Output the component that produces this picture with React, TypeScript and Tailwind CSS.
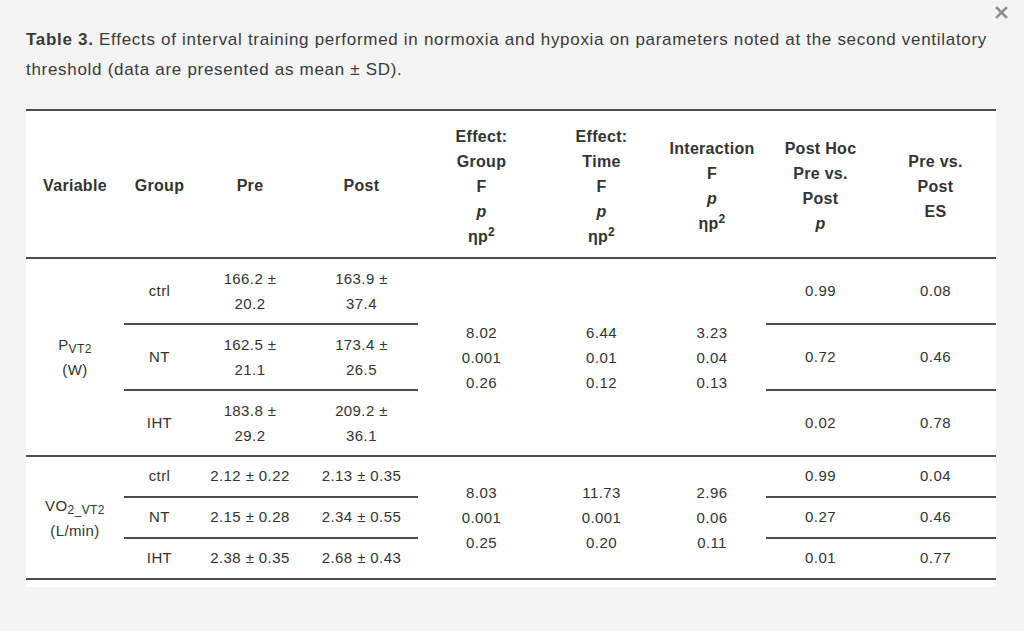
import React from "react";

const LINE = "border-[#4d4d4d]";

function Eta() {
  return (
    <span>
      ηp<sup className="text-[12px]">2</sup>
    </span>
  );
}

const pvt = [
  { g: "ctrl", pre: ["166.2 ±", "20.2"], post: ["163.9 ±", "37.4"], ph: "0.99", es: "0.08" },
  { g: "NT", pre: ["162.5 ±", "21.1"], post: ["173.4 ±", "26.5"], ph: "0.72", es: "0.46" },
  { g: "IHT", pre: ["183.8 ±", "29.2"], post: ["209.2 ±", "36.1"], ph: "0.02", es: "0.78" },
];

const vo2 = [
  { g: "ctrl", pre: "2.12 ± 0.22", post: "2.13 ± 0.35", ph: "0.99", es: "0.04" },
  { g: "NT", pre: "2.15 ± 0.28", post: "2.34 ± 0.55", ph: "0.27", es: "0.46" },
  { g: "IHT", pre: "2.38 ± 0.35", post: "2.68 ± 0.43", ph: "0.01", es: "0.77" },
];

function Stack({ lines }: { lines: React.ReactNode[] }) {
  return (
    <div className="flex flex-col items-center leading-[25px]">
      {lines.map((l, i) => (
        <span key={i}>{l}</span>
      ))}
    </div>
  );
}

export default function App() {
  return (
    <div
      className="relative min-h-[631px] bg-[#f4f4f4] pl-[26px] pr-[28px] pt-[25px] text-[#333]"
      style={{ fontFamily: '"Liberation Sans", Arial, sans-serif' }}
    >
      <button className="absolute right-[16px] top-[6px] text-[#8f8f8f]" aria-label="close">
        <svg width="13" height="13" viewBox="0 0 13 13">
          <path d="M2 2 L11 11 M11 2 L2 11" stroke="currentColor" strokeWidth="2.6" strokeLinecap="square" />
        </svg>
      </button>

      <p className="text-[17px] leading-[30px] tracking-[0.7px] text-[#3a3a3a]">
        <b>Table 3. </b>Effects of interval training performed in normoxia and hypoxia on parameters noted at the second
        ventilatory threshold (data are presented as mean ± SD).
      </p>

      <div className="mt-[24px] bg-white pb-[7px]">
        <table className="w-full table-fixed border-collapse text-center text-[15px] tracking-[0.4px]">
          <colgroup>
            <col className="w-[98px]" />
            <col className="w-[71px]" />
            <col className="w-[110px]" />
            <col className="w-[113px]" />
            <col className="w-[127px]" />
            <col className="w-[113px]" />
            <col className="w-[108px]" />
            <col className="w-[109px]" />
            <col className="w-[121px]" />
          </colgroup>
          <thead>
            <tr className={`h-[148px] border-y-2 ${LINE} text-[16px] font-bold tracking-[0.3px]`}>
              <th className="pt-[4px]">Variable</th>
              <th className="pt-[4px]">Group</th>
              <th className="pt-[4px]">Pre</th>
              <th className="pt-[4px]">Post</th>
              <th className="pt-[4px]">
                <Stack lines={["Effect:", "Group", "F", <i>p</i>, <Eta />]} />
              </th>
              <th className="pt-[4px]">
                <Stack lines={["Effect:", "Time", "F", <i>p</i>, <Eta />]} />
              </th>
              <th className="pt-[4px]">
                <Stack lines={["Interaction", "F", <i>p</i>, <Eta />]} />
              </th>
              <th className="pt-[4px]">
                <Stack lines={["Post Hoc", "Pre vs.", "Post", <i>p</i>]} />
              </th>
              <th className="pt-[4px]">
                <Stack lines={["Pre vs.", "Post", "ES"]} />
              </th>
            </tr>
          </thead>
          <tbody>
            {pvt.map((r, i) => {
              const sep = `border-b-2 ${LINE}`;
              return (
                <tr key={r.g} className="h-[66px]">
                  {i === 0 && (
                    <td rowSpan={3} className={`border-b-2 ${LINE}`}>
                      <Stack
                        lines={[
                          <span>
                            P<sub className="text-[12px]">VT2</sub>
                          </span>,
                          "(W)",
                        ]}
                      />
                    </td>
                  )}
                  <td className={sep}>{r.g}</td>
                  <td className={sep}>
                    <Stack lines={r.pre} />
                  </td>
                  <td className={sep}>
                    <Stack lines={r.post} />
                  </td>
                  {i === 0 && (
                    <>
                      <td rowSpan={3} className={`border-b-2 ${LINE}`}>
                        <Stack lines={["8.02", "0.001", "0.26"]} />
                      </td>
                      <td rowSpan={3} className={`border-b-2 ${LINE}`}>
                        <Stack lines={["6.44", "0.01", "0.12"]} />
                      </td>
                      <td rowSpan={3} className={`border-b-2 ${LINE}`}>
                        <Stack lines={["3.23", "0.04", "0.13"]} />
                      </td>
                    </>
                  )}
                  <td className={sep}>{r.ph}</td>
                  <td className={sep}>{r.es}</td>
                </tr>
              );
            })}
            {vo2.map((r, i) => {
              const sep = `border-b-2 ${LINE}`;
              return (
                <tr key={r.g} className="h-[41px]">
                  {i === 0 && (
                    <td rowSpan={3} className={`border-b-2 ${LINE}`}>
                      <Stack
                        lines={[
                          <span>
                            VO<sub className="text-[12px]">2_VT2</sub>
                          </span>,
                          "(L/min)",
                        ]}
                      />
                    </td>
                  )}
                  <td className={sep}>{r.g}</td>
                  <td className={sep}>{r.pre}</td>
                  <td className={sep}>{r.post}</td>
                  {i === 0 && (
                    <>
                      <td rowSpan={3} className={`border-b-2 ${LINE}`}>
                        <Stack lines={["8.03", "0.001", "0.25"]} />
                      </td>
                      <td rowSpan={3} className={`border-b-2 ${LINE}`}>
                        <Stack lines={["11.73", "0.001", "0.20"]} />
                      </td>
                      <td rowSpan={3} className={`border-b-2 ${LINE}`}>
                        <Stack lines={["2.96", "0.06", "0.11"]} />
                      </td>
                    </>
                  )}
                  <td className={sep}>{r.ph}</td>
                  <td className={sep}>{r.es}</td>
                </tr>
              );
            })}
          </tbody>
        </table>
      </div>
    </div>
  );
}
